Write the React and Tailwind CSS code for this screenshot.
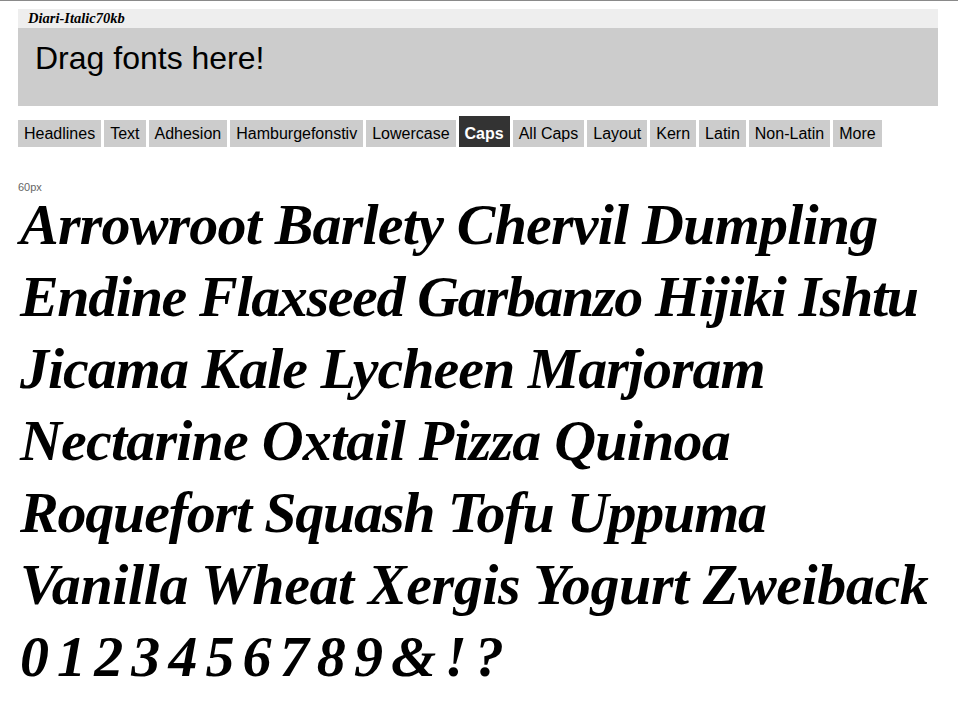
const tabs = [
  'Headlines',
  'Text',
  'Adhesion',
  'Hamburgefonstiv',
  'Lowercase',
  'Caps',
  'All Caps',
  'Layout',
  'Kern',
  'Latin',
  'Non-Latin',
  'More',
];

// each line gets its own tracking so the widths land where the specimen's do
const lines = [
  { text: 'Arrowroot Barlety Chervil Dumpling', tracking: 'tracking-[-0.8px]' },
  { text: 'Endine Flaxseed Garbanzo Hijiki Ishtu', tracking: 'tracking-[-1.35px]' },
  { text: 'Jicama Kale Lycheen Marjoram', tracking: 'tracking-[-1px]' },
  { text: 'Nectarine Oxtail Pizza Quinoa', tracking: 'tracking-[-0.8px]' },
  { text: 'Roquefort Squash Tofu Uppuma', tracking: 'tracking-[-1.2px]' },
  { text: 'Vanilla Wheat Xergis Yogurt Zweiback', tracking: 'tracking-[-0.4px]' },
  { text: '0 1 2 3 4 5 6 7 8 9 & ! ?', tracking: 'tracking-[-3.2px]' },
];

export default function App() {
  const active = 'Caps';

  return (
    <div className="min-h-[704px] overflow-hidden border-t border-[#8a8a8a] bg-white pt-[8px]">
      <div className="mx-[18px] w-[920px]">
        <div className="h-[19px] bg-[#eeeeee] pl-[10px] font-['Liberation_Serif',serif] text-[14.5px] font-bold italic leading-[19px] text-black">
          Diari-Italic70kb
        </div>
        <div className="h-[78px] bg-[#cccccc] pl-[17px] pt-[10px] font-['Liberation_Sans',Arial,sans-serif] text-[32px] leading-[40px] text-black">
          Drag fonts here!
        </div>
      </div>

      <div className="mx-[18px] mt-[10px] flex items-end gap-[3px] font-['Liberation_Sans',Arial,sans-serif] text-[16px]">
        {tabs.map((tab) =>
          tab === active ? (
            <div key={tab} className="flex h-[31px] items-center bg-[#333333] px-[6px] pt-[4px] font-bold text-white">
              {tab}
            </div>
          ) : (
            <div key={tab} className="flex h-[27px] items-center bg-[#cccccc] px-[6px] text-black">
              {tab}
            </div>
          )
        )}
      </div>

      <div className="mx-[18px] mt-[34px] font-['Liberation_Sans',Arial,sans-serif] text-[11px] leading-[12px] text-[#666666]">
        60px
      </div>

      <div className="ml-[20px] mt-[-4px] font-['Liberation_Serif',serif] text-[58px] font-bold italic leading-[72px] text-black">
        {lines.map((line) => (
          <div key={line.text} className={`whitespace-nowrap ${line.tracking}`}>
            {line.text}
          </div>
        ))}
      </div>
    </div>
  );
}
